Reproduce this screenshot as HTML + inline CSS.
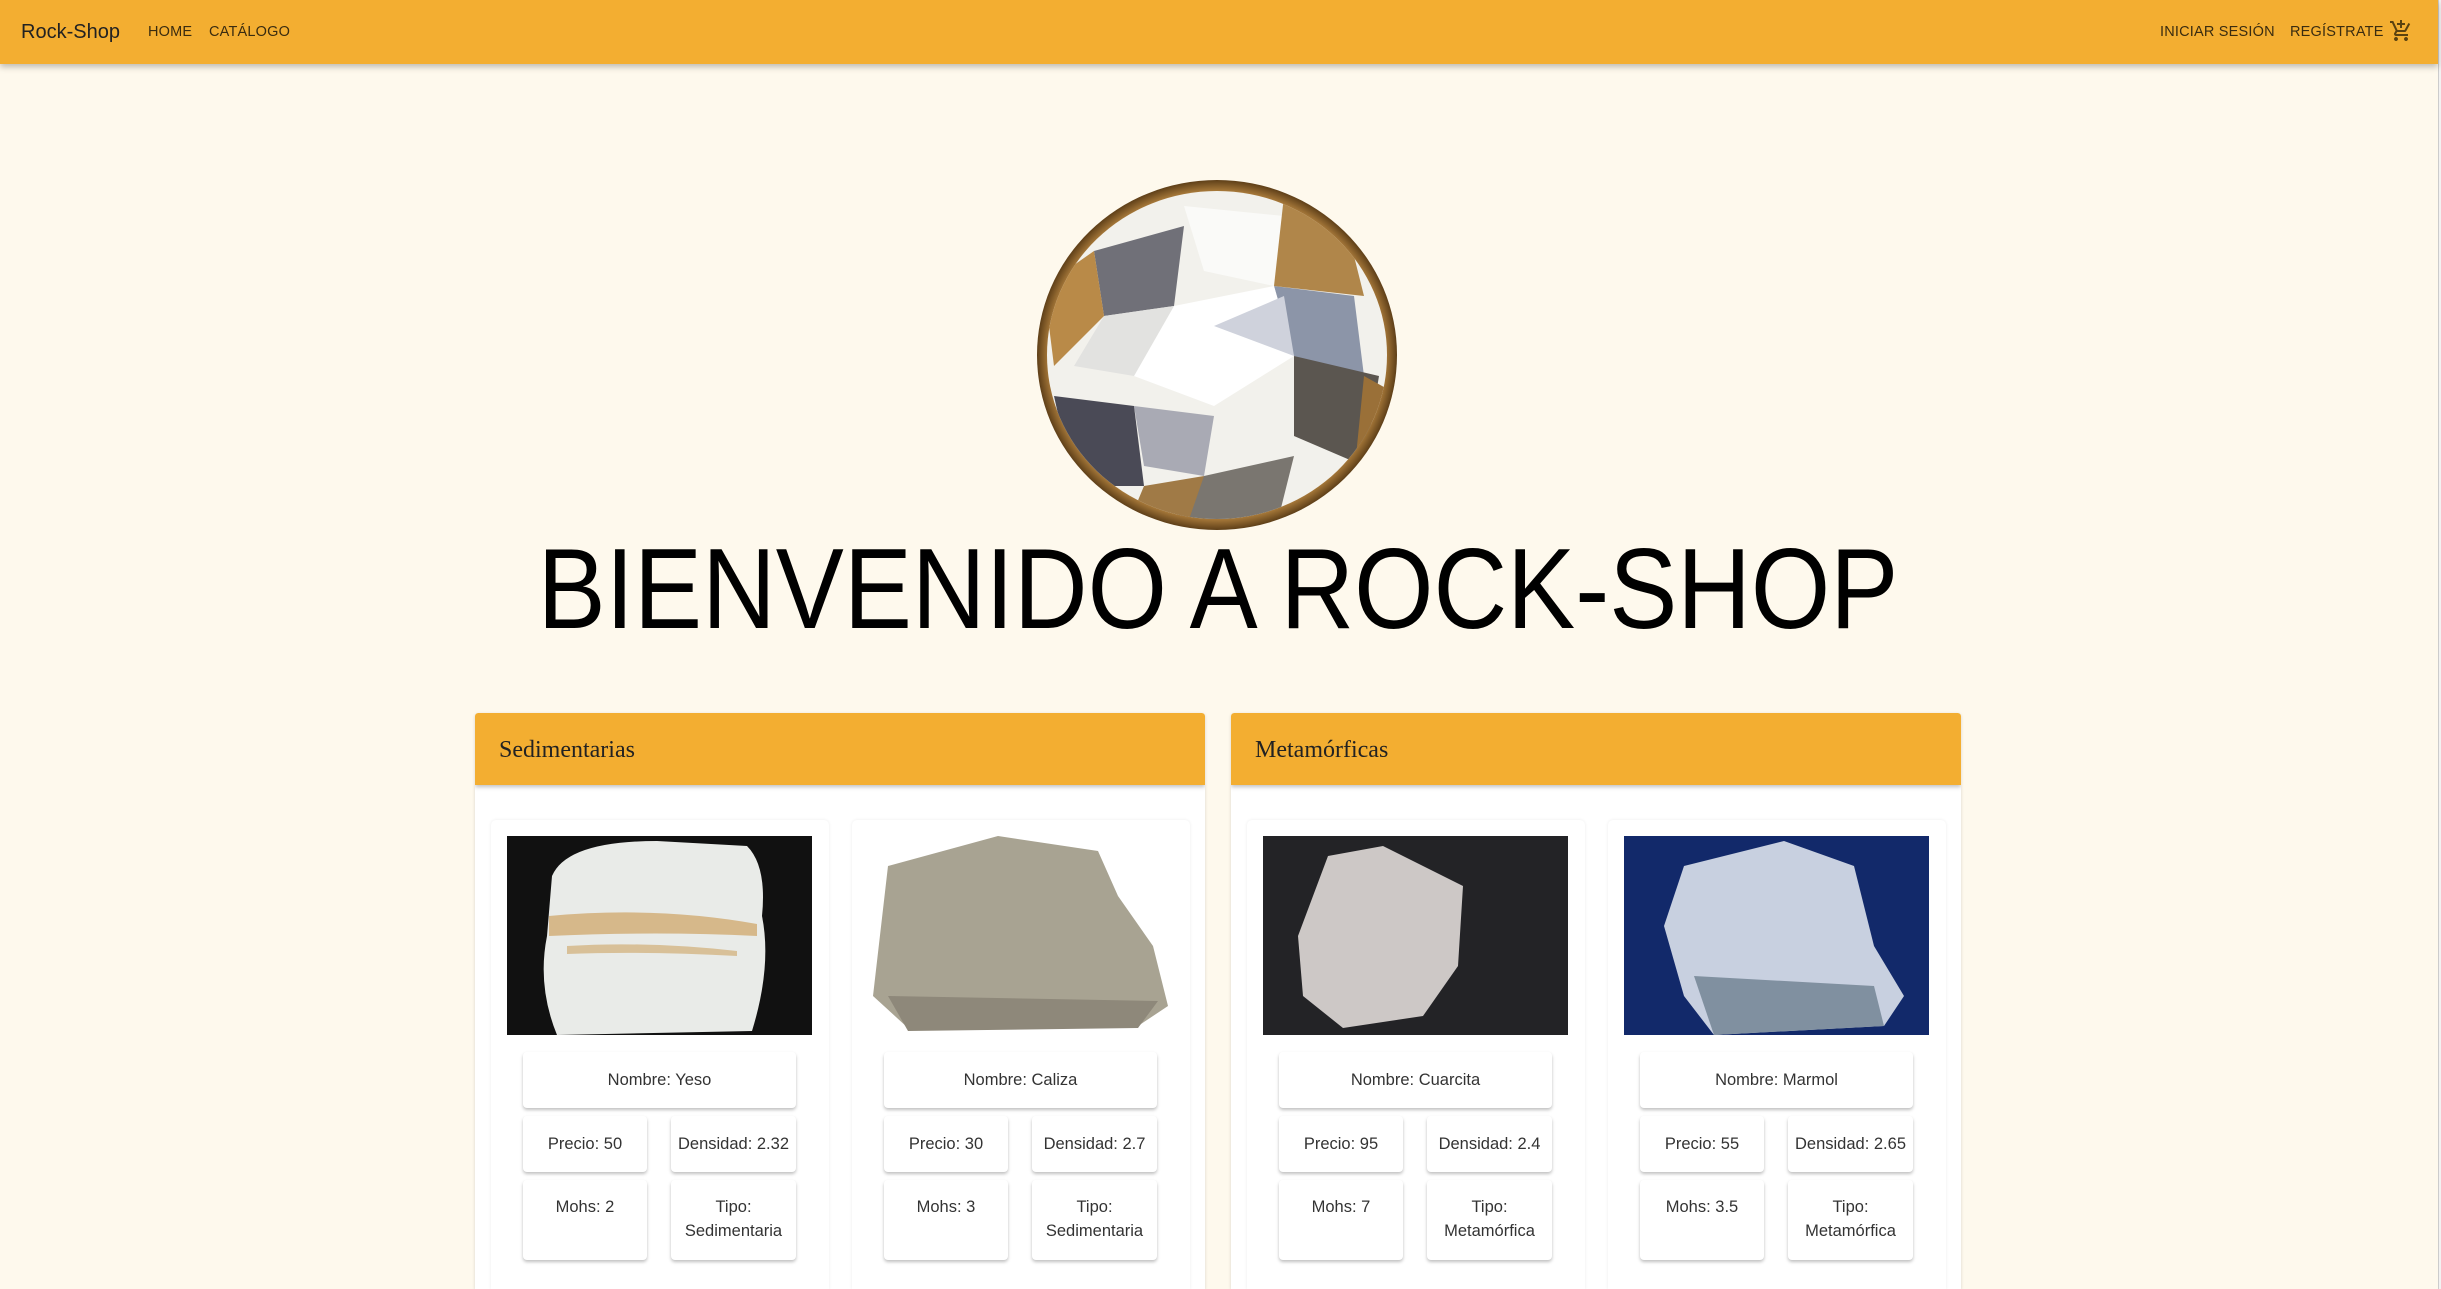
<!DOCTYPE html>
<html><head><meta charset="utf-8"><style>
*{box-sizing:border-box;margin:0;padding:0}
html,body{width:2441px;height:1289px;overflow:hidden;background:#fef9ed;font-family:"Liberation Sans",Arial,sans-serif;position:relative}
.nav{position:absolute;left:0;top:0;width:2438px;height:64px;background:#f3ae31;box-shadow:0 3px 6px rgba(0,0,0,.25);z-index:2}
.nav span{position:absolute;color:#3a2c10;top:0;line-height:64px}
.brand{left:21px;font-size:20px;color:#222!important}
.lk{font-size:14.5px;letter-spacing:.2px}
.sb{position:absolute;left:2438px;top:0;width:3px;height:1289px;background:#f2f2f2;border-left:1px solid #ccc}
h1{position:absolute;left:0;width:2436px;top:530px;text-align:center;font-weight:normal;font-size:114px;color:#000;line-height:120px;transform:scaleX(0.895);transform-origin:1218px 0}
.panel{position:absolute;top:713px;width:730px;height:576px;background:#fff;border-radius:3px 3px 0 0;box-shadow:0 1px 3px rgba(0,0,0,.15);overflow:hidden}
.ph{height:72px;background:#f3ae31;border-radius:3px 3px 0 0;box-shadow:0 2px 4px rgba(0,0,0,.25);font-family:"Liberation Serif",serif;font-size:24px;color:#222;padding-left:24px;line-height:74px;position:relative;z-index:1}
.card{position:absolute;top:107px;width:338px;height:469px;background:#fff;border-radius:5px 5px 0 0;box-shadow:0 0 3px rgba(0,0,0,.08)}
.img{position:absolute;left:16px;top:16px;width:305px;height:199px;overflow:hidden}
.b{position:absolute;background:#fff;border-radius:4px;box-shadow:0 2px 3px rgba(0,0,0,.25);text-align:center;font-size:16.5px;color:#333;line-height:24px}
</style></head><body>
<div class="nav">
<span class="brand">Rock-Shop</span>
<span class="lk" style="left:148px">HOME</span>
<span class="lk" style="left:209px">CATÁLOGO</span>
<span class="lk" style="left:2160px">INICIAR SESIÓN</span>
<span class="lk" style="left:2290px">REGÍSTRATE</span>
<svg style="position:absolute;left:2389px;top:19px" width="24" height="24" viewBox="0 0 24 24" fill="#5a4210"><path d="M11 9h2V6h3V4h-3V1h-2v3H8v2h3v3zm-4 9c-1.1 0-2 .9-2 2s.9 2 2 2 2-.9 2-2-.9-2-2-2zm10 0c-1.1 0-2 .9-2 2s.9 2 2 2 2-.9 2-2-.9-2-2-2zm-9.8-3.3l.03-.12.9-1.58h7.45c.75 0 1.41-.41 1.75-1.03l3.86-7.01L19.42 4l-3.87 7H8.53L4.270 2H1v2h2l3.6 7.59-1.35 2.45c-.16.28-.25.61-.25.96 0 1.1.9 2 2 2h12v-2H7.42c-.13 0-.25-.11-.25-.25z"/></svg>
</div>
<div class="sb"></div>

<svg style="position:absolute;left:1034px;top:176px" width="366" height="358" viewBox="0 0 366 358">
<defs><radialGradient id="rim" cx=".5" cy=".5" r=".5"><stop offset=".8" stop-color="#d8c49a"/><stop offset=".93" stop-color="#b0803e"/><stop offset="1" stop-color="#5e3f18"/></radialGradient>
<clipPath id="cc"><ellipse cx="183" cy="179" rx="170" ry="164"/></clipPath></defs>
<ellipse cx="183" cy="179" rx="180" ry="175" fill="url(#rim)"/>
<g clip-path="url(#cc)">
<rect width="366" height="358" fill="#f2f1ec"/>
<polygon points="60,75 150,50 140,130 70,140" fill="#707078"/>
<polygon points="150,30 250,40 240,110 170,95" fill="#fafaf8"/>
<polygon points="240,110 320,120 330,200 260,180" fill="#8c95a8"/>
<polygon points="260,180 345,200 330,290 260,260" fill="#5b5650"/>
<polygon points="100,230 180,240 170,300 110,290" fill="#a9aab4"/>
<polygon points="170,300 260,280 240,360 130,360" fill="#7a7670"/>
<polygon points="20,220 100,230 110,310 40,310" fill="#4a4a56"/>
<polygon points="140,130 240,110 260,180 180,230 100,200" fill="#ffffff"/>
<polygon points="180,150 250,120 260,180" fill="#cfd2dc"/>
<polygon points="70,140 140,130 100,200 40,190" fill="#e2e2e0"/>
<polygon points="250,20 310,40 330,120 240,110" fill="#b0864a"/>
<polygon points="10,110 60,75 70,140 20,190" fill="#b98a48"/>
<polygon points="330,200 366,220 366,320 320,300" fill="#9a7038"/>
<polygon points="110,310 170,300 150,358 90,358" fill="#a07a46"/>
</g>
</svg>

<h1>BIENVENIDO A ROCK-SHOP</h1>

<div class="panel" style="left:475px"><div class="ph">Sedimentarias</div>
<div class="card" style="left:16px">
<div class="img" style="background:#111"><svg width="305" height="199"><path d="M45,40 Q60,5 150,5 L240,10 Q260,30 255,80 Q265,130 245,195 L50,199 Q30,150 40,100 Z" fill="#e9ebe8"/><path d="M42,80 Q150,70 250,88 L250,100 Q150,95 42,100Z" fill="#d6b88a"/><path d="M60,110 Q140,105 230,115 L230,120 Q140,115 60,118Z" fill="#d8c098"/></svg></div>
<div class="b" style="left:32px;top:232px;width:273px;height:56px;line-height:56px">Nombre: Yeso</div>
<div class="b" style="left:32px;top:296px;width:124px;height:56px;line-height:56px">Precio: 50</div>
<div class="b" style="left:180px;top:296px;width:125px;height:56px;line-height:56px">Densidad: 2.32</div>
<div class="b" style="left:32px;top:360px;width:124px;height:80px;padding-top:15px">Mohs: 2</div>
<div class="b" style="left:180px;top:360px;width:125px;height:80px;padding-top:15px">Tipo:<br>Sedimentaria</div>
</div>
<div class="card" style="left:377px">
<div class="img" style="background:#fff"><svg width="305" height="199"><path d="M20,30 L130,0 L230,15 L250,60 L285,110 L300,170 L270,190 L40,192 L5,160 Z" fill="#a8a392"/><path d="M20,160 L290,165 L270,192 L40,195Z" fill="#8e887a"/></svg></div>
<div class="b" style="left:32px;top:232px;width:273px;height:56px;line-height:56px">Nombre: Caliza</div>
<div class="b" style="left:32px;top:296px;width:124px;height:56px;line-height:56px">Precio: 30</div>
<div class="b" style="left:180px;top:296px;width:125px;height:56px;line-height:56px">Densidad: 2.7</div>
<div class="b" style="left:32px;top:360px;width:124px;height:80px;padding-top:15px">Mohs: 3</div>
<div class="b" style="left:180px;top:360px;width:125px;height:80px;padding-top:15px">Tipo:<br>Sedimentaria</div>
</div>
</div>

<div class="panel" style="left:1231px"><div class="ph">Metamórficas</div>
<div class="card" style="left:16px">
<div class="img" style="background:#232326"><svg width="305" height="199"><path d="M65,20 L120,10 L200,50 L195,130 L160,180 L80,192 L40,160 L35,100 Z" fill="#cdc8c6"/></svg></div>
<div class="b" style="left:32px;top:232px;width:273px;height:56px;line-height:56px">Nombre: Cuarcita</div>
<div class="b" style="left:32px;top:296px;width:124px;height:56px;line-height:56px">Precio: 95</div>
<div class="b" style="left:180px;top:296px;width:125px;height:56px;line-height:56px">Densidad: 2.4</div>
<div class="b" style="left:32px;top:360px;width:124px;height:80px;padding-top:15px">Mohs: 7</div>
<div class="b" style="left:180px;top:360px;width:125px;height:80px;padding-top:15px">Tipo:<br>Metamórfica</div>
</div>
<div class="card" style="left:377px">
<div class="img" style="background:#12296a"><svg width="305" height="199"><path d="M60,30 L160,5 L230,30 L250,110 L280,160 L260,190 L90,199 L60,160 L40,90 Z" fill="#c8d0e0"/><path d="M70,140 L250,150 L260,190 L90,199Z" fill="#8090a0"/></svg></div>
<div class="b" style="left:32px;top:232px;width:273px;height:56px;line-height:56px">Nombre: Marmol</div>
<div class="b" style="left:32px;top:296px;width:124px;height:56px;line-height:56px">Precio: 55</div>
<div class="b" style="left:180px;top:296px;width:125px;height:56px;line-height:56px">Densidad: 2.65</div>
<div class="b" style="left:32px;top:360px;width:124px;height:80px;padding-top:15px">Mohs: 3.5</div>
<div class="b" style="left:180px;top:360px;width:125px;height:80px;padding-top:15px">Tipo:<br>Metamórfica</div>
</div>
</div>
</body></html>
